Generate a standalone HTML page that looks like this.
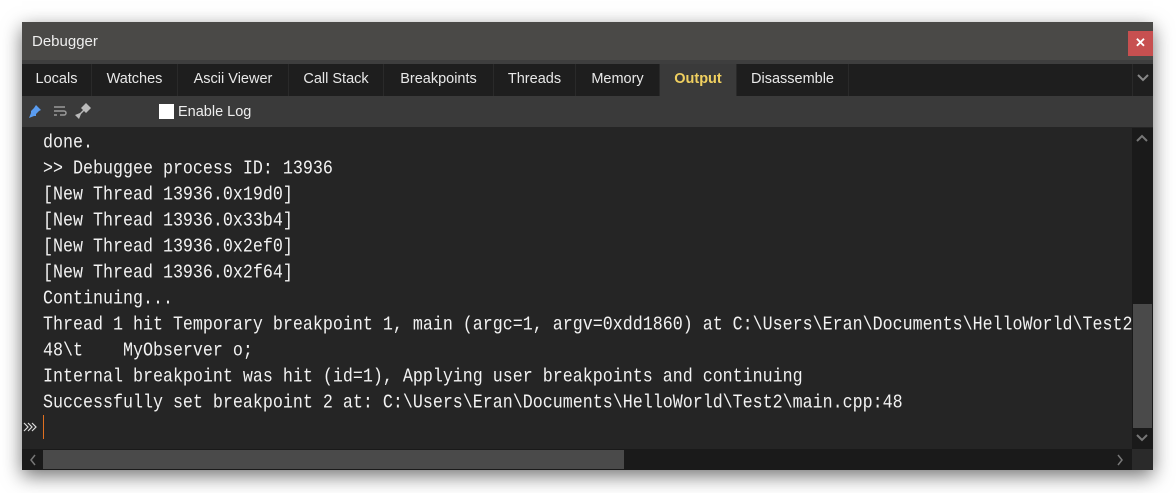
<!DOCTYPE html>
<html><head><style>
*{margin:0;padding:0;box-sizing:border-box}
body{width:1176px;height:493px;background:#fff;position:relative;overflow:hidden;font-family:"Liberation Sans",sans-serif}
.win{position:absolute;left:22px;top:22px;width:1131px;height:448px;background:#252525;box-shadow:0 6px 18px rgba(0,0,0,.55)}
.title{position:absolute;left:0;top:0;width:100%;height:38px;background:#4a4947;color:#eee;font-size:15px;line-height:40px;padding-left:10px}
.close{position:absolute;right:0;top:9px;width:25px;height:25px;background:#c75050;color:#fff;font-size:13px;text-align:center;line-height:24px;font-weight:bold}
.gap{position:absolute;top:38px;left:0;width:100%;height:4px;background:#3e3e3e}
.tabs{position:absolute;top:42px;left:0;width:100%;height:32px;background:#1e1e1e}
.tab{position:absolute;top:0;height:32px;line-height:31px;color:#e8e8e8;font-size:14.5px;border-right:1px solid #2a2a2a;text-align:center}
.tab.act{background:#3a3a3a;color:#f0d060;font-weight:bold}
.tb{position:absolute;top:74px;left:0;width:100%;height:31px;background:#3a3a3a}
.out{position:absolute;top:109px;left:21px;font-family:"Liberation Mono",monospace;font-size:16.67px;line-height:26px;color:#f2f2f2;white-space:pre}
.out div{transform:scaleY(1.15);transform-origin:left center}
.vs{position:absolute;right:0;top:106px;width:21px;height:321px;background:#1a1a1a}
.hs{position:absolute;left:0;top:427px;width:1110px;height:21px;background:#1a1a1a}
</style></head><body>
<div class="win">
<div class="title">Debugger<div class="close">✕</div></div>
<div class="gap"></div>
<div class="tabs">
<div class="tab" style="left:0;width:70px">Locals</div>
<div class="tab" style="left:70px;width:86px">Watches</div>
<div class="tab" style="left:156px;width:111px">Ascii Viewer</div>
<div class="tab" style="left:267px;width:95px">Call Stack</div>
<div class="tab" style="left:362px;width:110px">Breakpoints</div>
<div class="tab" style="left:472px;width:82px">Threads</div>
<div class="tab" style="left:554px;width:84px">Memory</div>
<div class="tab act" style="left:638px;width:77px">Output</div>
<div class="tab" style="left:715px;width:112px">Disassemble</div>
<div class="tab" style="right:0;width:21px;border-left:1px solid #2a2a2a;border-right:none;color:#888">
<svg width="14" height="10" viewBox="0 0 14 10"><path d="M2 2l5 5 5-5" stroke="#888" stroke-width="2" fill="none"/></svg></div>
</div>
<div class="tb">
<svg style="position:absolute;left:6px;top:8px" width="14" height="14" viewBox="0 0 14 14"><path d="M8 1l5 5-2 1-3 3 0 2-2 0-5 2 2-5 0-2 3-3z" fill="#5a9cf0"/></svg>
<svg style="position:absolute;left:31px;top:9px" width="14" height="12" viewBox="0 0 14 12"><path d="M1 2h11M1 6h10a2 2 0 0 1 0 4h-4M1 10h3" stroke="#999" stroke-width="1.5" fill="none"/></svg>
<svg style="position:absolute;left:52px;top:6px" width="18" height="18" viewBox="0 0 18 18"><path d="M12 1l5 5-5 5-2-2-3 3-2 5-4-4 5-2 3-3-2-2z" fill="#bbb"/></svg>
<div style="position:absolute;left:137px;top:8px;width:15px;height:15px;background:#fff"></div>
<div style="position:absolute;left:156px;top:1px;line-height:31px;color:#eee;font-size:14.5px">Enable Log</div>
</div>
<div class="out"><div>done.</div><div>&gt;&gt; Debuggee process ID: 13936</div><div>[New Thread 13936.0x19d0]</div><div>[New Thread 13936.0x33b4]</div><div>[New Thread 13936.0x2ef0]</div><div>[New Thread 13936.0x2f64]</div><div>Continuing...</div><div>Thread 1 hit Temporary breakpoint 1, main (argc=1, argv=0xdd1860) at C:\Users\Eran\Documents\HelloWorld\Test2</div><div>48\t    MyObserver o;</div><div>Internal breakpoint was hit (id=1), Applying user breakpoints and continuing</div><div>Successfully set breakpoint 2 at: C:\Users\Eran\Documents\HelloWorld\Test2\main.cpp:48</div></div>
<svg style="position:absolute;left:1px;top:399px" width="16" height="12" viewBox="0 0 16 12"><path d="M1 2l4 4-4 4M5 2l4 4-4 4M9 2l4 4-4 4" stroke="#ddd" stroke-width="1.2" fill="none"/></svg>
<div style="position:absolute;left:21px;top:393px;width:1px;height:24px;background:#e07020"></div>
<div class="vs">
<svg style="position:absolute;left:4px;top:6px" width="12" height="8" viewBox="0 0 12 8"><path d="M1 7l5-5 5 5" stroke="#777" stroke-width="2" fill="none"/></svg>
<div style="position:absolute;left:1px;top:176px;width:19px;height:124px;background:#4a4a4a"></div>
<svg style="position:absolute;left:4px;top:306px" width="12" height="8" viewBox="0 0 12 8"><path d="M1 1l5 5 5-5" stroke="#777" stroke-width="2" fill="none"/></svg>
</div>
<div class="hs">
<div style="position:absolute;left:21px;top:1px;width:581px;height:19px;background:#4a4a4a"></div>
<svg style="position:absolute;left:7px;top:5px" width="8" height="12" viewBox="0 0 8 12"><path d="M6 1l-4 5 4 5" stroke="#777" stroke-width="1.5" fill="none"/></svg>
<svg style="position:absolute;left:1094px;top:5px" width="8" height="12" viewBox="0 0 8 12"><path d="M2 1l4 5-4 5" stroke="#777" stroke-width="1.5" fill="none"/></svg>
</div>
<div style="position:absolute;right:0;top:427px;width:21px;height:21px;background:#2a2a2a"></div>
</div>
</body></html>
